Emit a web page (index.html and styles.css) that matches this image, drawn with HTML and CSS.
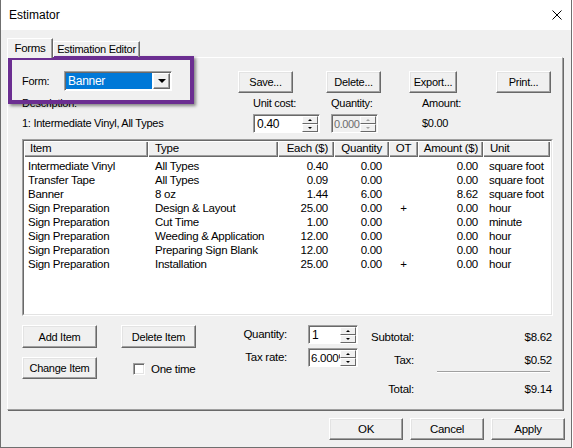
FILE: index.html
```html
<!doctype html>
<html>
  <head>
    <meta charset="utf-8">
    <title>Estimator</title>
    <link rel="stylesheet" href="styles.css">
  </head>
  <body>
    <div class="window">

      <div class="titlebar">
        <span class="title">Estimator</span>
        <svg class="close" width="10" height="10" viewBox="0 0 10 10">
          <path d="M0.5 0.5 L9.5 9.5 M9.5 0.5 L0.5 9.5" stroke="#000" stroke-width="1" fill="none"/>
        </svg>
      </div>

      <div class="client">
        <div class="tabs">
          <div class="tab active">Forms</div>
          <div class="tab">Estimation Editor</div>
        </div>

        <div class="panel">

          <div class="form-row">
            <span class="lbl-form">Form:</span>
            <div class="combo">
              <span class="combo-sel">Banner</span>
              <span class="combo-drop"></span>
            </div>
            <button class="btn btn-save">Save...</button>
            <button class="btn btn-delete">Delete...</button>
            <button class="btn btn-export">Export...</button>
            <button class="btn btn-print">Print...</button>
          </div>

          <div class="desc-grid">
            <span>Description:</span>
            <span>Unit cost:</span>
            <span>Quantity:</span>
            <span>Amount:</span>
            <span class="mid">1: Intermediate Vinyl, All Types</span>
            <div class="spin spin-cost">
              <span class="spin-val">0.40</span>
              <span class="spin-btns"><span class="up"></span><span class="down"></span></span>
            </div>
            <div class="spin spin-qty disabled">
              <span class="spin-val">0.000</span>
              <span class="spin-btns"><span class="up"></span><span class="down"></span></span>
            </div>
            <span class="mid">$0.00</span>
          </div>

          <div class="listview">
            <div class="lv-inner">
              <div class="lv-head">
                <span class="c-item">Item</span>
                <span class="c-type">Type</span>
                <span class="c-each">Each ($)</span>
                <span class="c-qty">Quantity</span>
                <span class="c-ot">OT</span>
                <span class="c-amt">Amount ($)</span>
                <span class="c-unit">Unit</span>
              </div>
              <div class="lv-body">
                <div class="lv-row"><span class="c-item">Intermediate Vinyl</span><span class="c-type">All Types</span><span class="c-each">0.40</span><span class="c-qty">0.00</span><span class="c-ot"></span><span class="c-amt">0.00</span><span class="c-unit">square foot</span></div>
                <div class="lv-row"><span class="c-item">Transfer Tape</span><span class="c-type">All Types</span><span class="c-each">0.09</span><span class="c-qty">0.00</span><span class="c-ot"></span><span class="c-amt">0.00</span><span class="c-unit">square foot</span></div>
                <div class="lv-row"><span class="c-item">Banner</span><span class="c-type">8 oz</span><span class="c-each">1.44</span><span class="c-qty">6.00</span><span class="c-ot"></span><span class="c-amt">8.62</span><span class="c-unit">square foot</span></div>
                <div class="lv-row"><span class="c-item">Sign Preparation</span><span class="c-type">Design &amp; Layout</span><span class="c-each">25.00</span><span class="c-qty">0.00</span><span class="c-ot">+</span><span class="c-amt">0.00</span><span class="c-unit">hour</span></div>
                <div class="lv-row"><span class="c-item">Sign Preparation</span><span class="c-type">Cut Time</span><span class="c-each">1.00</span><span class="c-qty">0.00</span><span class="c-ot"></span><span class="c-amt">0.00</span><span class="c-unit">minute</span></div>
                <div class="lv-row"><span class="c-item">Sign Preparation</span><span class="c-type">Weeding &amp; Application</span><span class="c-each">12.00</span><span class="c-qty">0.00</span><span class="c-ot"></span><span class="c-amt">0.00</span><span class="c-unit">hour</span></div>
                <div class="lv-row"><span class="c-item">Sign Preparation</span><span class="c-type">Preparing Sign Blank</span><span class="c-each">12.00</span><span class="c-qty">0.00</span><span class="c-ot"></span><span class="c-amt">0.00</span><span class="c-unit">hour</span></div>
                <div class="lv-row"><span class="c-item">Sign Preparation</span><span class="c-type">Installation</span><span class="c-each">25.00</span><span class="c-qty">0.00</span><span class="c-ot">+</span><span class="c-amt">0.00</span><span class="c-unit">hour</span></div>
              </div>
            </div>
          </div>

          <div class="bottom">
            <div class="col-edit">
              <button class="btn btn-item">Add Item</button>
              <button class="btn btn-item btn-change">Change Item</button>
            </div>
            <div class="col-del">
              <button class="btn btn-item">Delete Item</button>
              <div class="check-row">
                <span class="checkbox"></span>
                <span>One time</span>
              </div>
            </div>
            <div class="col-spin">
              <span class="spin-lbl">Quantity:</span>
              <div class="spin spin-small">
                <span class="spin-val">1</span>
                <span class="spin-btns"><span class="up"></span><span class="down"></span></span>
              </div>
              <span class="spin-lbl">Tax rate:</span>
              <div class="spin spin-small">
                <span class="spin-val spin-tight">6.000%</span>
                <span class="spin-btns"><span class="up"></span><span class="down"></span></span>
              </div>
            </div>
            <div class="col-totals">
              <div class="tot-row"><span>Subtotal:</span><span>$8.62</span></div>
              <div class="tot-row tot-tax"><span>Tax:</span><span>$0.52</span></div>
              <div class="tot-sep"></div>
              <div class="tot-row tot-total"><span>Total:</span><span>$9.14</span></div>
            </div>
          </div>

        </div>

        <div class="dlg-buttons">
          <button class="btn btn-dlg">OK</button>
          <button class="btn btn-dlg">Cancel</button>
          <button class="btn btn-dlg">Apply</button>
        </div>
      </div>

      <!-- annotation box drawn over the form picker -->
      <div class="highlight"></div>
    </div>
  </body>
</html>
```

FILE: styles.css
```css
html, body {
  margin: 0;
  padding: 0;
  background: #ffffff;
}

body {
  font-family: "Liberation Sans", Arial, sans-serif;
  font-size: 11px;
  letter-spacing: -0.27px;
  color: #000000;
}

.window {
  position: relative;
  width: 572px;
  height: 448px;
  box-sizing: border-box;
  border: 1px solid #6f6f6f;
  border-top: none;
  background: #f0f0f0;
}

.titlebar {
  height: 30px;
  background: #ffffff;
  display: flex;
  align-items: center;
  justify-content: space-between;
  padding: 0 9px 0 8px;
}

.title {
  font-size: 12px;
  letter-spacing: 0;
}

.client {
  padding: 8px 0 0 6px;
}

/* tabs */
.tabs {
  display: flex;
  align-items: flex-end;
  height: 19px;
  position: relative;
  z-index: 1;
}

.tab {
  box-sizing: border-box;
  height: 16px;
  width: 87px;
  line-height: 15px;
  text-align: center;
  border-top: 1px solid #ffffff;
  border-left: 1px solid #ffffff;
  border-right: 1px solid #696969;
  box-shadow: inset -1px 0 #a0a0a0;
}

.tab.active {
  width: 46px;
  height: 20px;
  line-height: 19px;
  margin-bottom: -1px;
  background: #f0f0f0;
  font-size: 11.5px;
}

/* tab page */
.panel {
  width: 556px;
  height: 353px;
  box-sizing: border-box;
  border-top: 1px solid #ffffff;
  border-left: 1px solid #ffffff;
  border-right: 1px solid #a0a0a0;
  border-bottom: 1px solid #a0a0a0;
  box-shadow: 1px 1px 0 #696969;
}

.form-row {
  display: flex;
  align-items: flex-start;
  margin-top: 13px;
  padding-left: 14px;
  height: 22px;
}

.lbl-form {
  width: 42px;
  line-height: 20px;
}

.combo {
  width: 108px;
  height: 20px;
  box-sizing: border-box;
  display: flex;
  border: 1px solid;
  border-color: #a0a0a0 #ffffff #ffffff #a0a0a0;
  box-shadow: inset 1px 1px #696969;
  background: #ffffff;
  padding: 1px;
}

.combo-sel {
  flex: 1;
  background: #0078d7;
  color: #ffffff;
  padding-left: 2px;
  line-height: 16px;
  font-size: 12px;
  margin-right: 1px;
}

.combo-drop {
  width: 17px;
  box-sizing: border-box;
  background: #f0f0f0;
  border: 1px solid;
  border-color: #ffffff #696969 #696969 #ffffff;
  box-shadow: inset -1px -1px #a0a0a0;
  display: flex;
  align-items: center;
  justify-content: center;
}

.combo-drop::after {
  content: "";
  border-left: 4px solid transparent;
  border-right: 4px solid transparent;
  border-top: 4px solid #000000;
}

/* push buttons */
.btn {
  box-sizing: border-box;
  height: 22px;
  padding: 0;
  margin: 0;
  font-family: inherit;
  font-size: 11px;
  letter-spacing: -0.27px;
  color: #000000;
  background: #f0f0f0;
  border: 1px solid;
  border-color: #ffffff #696969 #696969 #ffffff;
  box-shadow: inset -1px -1px #a0a0a0, inset 1px 1px #e3e3e3;
}

.btn-save {
  width: 55px;
  margin-left: 66px;
}

.btn-delete {
  width: 55px;
  margin-left: 33px;
}

.btn-export {
  width: 48px;
  margin-left: 28px;
}

.btn-print {
  width: 55px;
  margin-left: 39px;
}

/* description + spinners */
.desc-grid {
  display: grid;
  grid-template-columns: 231px 78px 91px 1fr;
  grid-template-rows: 13px 19px;
  row-gap: 4px;
  margin-top: 4px;
  padding-left: 14px;
  line-height: 13px;
}

.desc-grid .mid {
  align-self: center;
}

.spin {
  display: flex;
  height: 19px;
  box-sizing: border-box;
  border: 1px solid;
  border-color: #a0a0a0 #ffffff #ffffff #a0a0a0;
  box-shadow: inset 1px 1px #696969;
  background: #ffffff;
}

.spin-cost {
  width: 67px;
}

.spin-qty {
  width: 47px;
}

.spin-small {
  width: 50px;
}

.spin-val {
  flex: 1;
  min-width: 0;
  overflow: hidden;
  white-space: nowrap;
  padding: 1px 0 0 3px;
  line-height: 16px;
  font-size: 12px;
}

.spin-qty .spin-val {
  padding-left: 2px;
  font-size: 11px;
  letter-spacing: -0.4px;
}

.spin-tight {
  padding-left: 2px;
  font-size: 11.5px;
}

.spin-btns {
  width: 16px;
  display: flex;
  flex-direction: column;
  padding: 1px 1px 0 0;
}

.spin-btns span {
  flex: 1;
  box-sizing: border-box;
  background: #f0f0f0;
  border: 1px solid;
  border-color: #ffffff #696969 #696969 #ffffff;
  display: flex;
  align-items: center;
  justify-content: center;
}

.spin-btns .up::after {
  content: "";
  border-left: 2px solid transparent;
  border-right: 2px solid transparent;
  border-bottom: 2px solid #000000;
}

.spin-btns .down::after {
  content: "";
  border-left: 2px solid transparent;
  border-right: 2px solid transparent;
  border-top: 2px solid #000000;
}

.spin.disabled {
  background: #f0f0f0;
  color: #6d6d6d;
}

.spin.disabled .up::after {
  border-bottom-color: #a0a0a0;
}

.spin.disabled .down::after {
  border-top-color: #a0a0a0;
}

/* list view */
.listview {
  width: 531px;
  height: 177px;
  box-sizing: border-box;
  margin: 6px 0 0 14px;
  border: 1px solid;
  border-color: #a0a0a0 #ffffff #ffffff #a0a0a0;
}

.lv-inner {
  height: 100%;
  box-sizing: border-box;
  border: 1px solid;
  border-color: #696969 #e3e3e3 #e3e3e3 #696969;
  background: #ffffff;
}

.lv-head,
.lv-row {
  display: grid;
  grid-template-columns: 124px 130px 56px 55px 29px 65px 67px 1fr;
}

.lv-head {
  height: 16px;
}

.lv-head span {
  box-sizing: border-box;
  background: #f0f0f0;
  line-height: 15px;
  font-size: 11.5px;
  box-shadow: inset 1px 1px #ffffff, inset -1px -1px #696969, inset -2px -2px #a0a0a0;
  white-space: nowrap;
}

.lv-body {
  padding-top: 2px;
}

.lv-row {
  height: 14px;
  line-height: 14px;
  font-size: 11.5px;
}

.lv-row span {
  white-space: nowrap;
}

.c-item {
  padding-left: 4px;
}

.lv-head .c-item {
  padding-left: 6px;
}

.c-type {
  padding-left: 7px;
}

.c-each {
  text-align: right;
  padding-right: 6px;
}

.c-qty {
  text-align: right;
  padding-right: 7px;
}

.c-ot {
  text-align: center;
}

.c-amt {
  text-align: right;
  padding-right: 5px;
}

.c-unit {
  padding-left: 6px;
}

.lv-head .c-unit {
  padding-left: 7px;
}

/* lower controls */
.bottom {
  display: flex;
  align-items: flex-start;
  margin-top: 9px;
  padding-left: 14px;
}

.col-edit,
.col-del {
  display: flex;
  flex-direction: column;
  width: 75px;
}

.col-del {
  margin-left: 24px;
}

.btn-item {
  width: 75px;
  height: 23px;
}

.btn-change {
  height: 22px;
  margin-top: 9px;
}

.check-row {
  display: flex;
  align-items: center;
  gap: 6px;
  height: 14px;
  margin-top: 14px;
  padding-left: 12px;
  font-size: 11.5px;
}

.checkbox {
  width: 12px;
  height: 12px;
  box-sizing: border-box;
  background: #ffffff;
  border: 1px solid;
  border-color: #a0a0a0 #ffffff #ffffff #a0a0a0;
  box-shadow: inset 1px 1px #696969, inset -1px -1px #e3e3e3;
}

.col-spin {
  display: grid;
  grid-template-columns: 112px 50px;
  grid-auto-rows: 19px;
  row-gap: 4px;
}

.spin-lbl {
  text-align: right;
  padding-right: 21px;
  line-height: 19px;
  font-size: 11.5px;
}

.col-totals {
  display: flex;
  flex-direction: column;
  margin-top: 6px;
  width: 194px;
}

.tot-row {
  display: grid;
  grid-template-columns: 56px 138px;
  line-height: 13px;
  font-size: 11.5px;
}

.tot-row span {
  text-align: right;
}

.tot-tax {
  margin-top: 10px;
}

.tot-sep {
  margin: 4px 0 0 79px;
  width: 113px;
  height: 1px;
  background: #a0a0a0;
  border-bottom: 1px solid #ffffff;
}

.tot-total {
  margin-top: 10px;
}

/* OK / Cancel / Apply */
.dlg-buttons {
  display: flex;
  justify-content: flex-end;
  gap: 7px;
  margin-top: 8px;
  padding-right: 6px;
}

.btn-dlg {
  width: 74px;
  height: 22px;
  font-size: 11.5px;
}

.highlight {
  position: absolute;
  left: 7px;
  top: 56px;
  width: 186px;
  height: 48px;
  box-sizing: border-box;
  border: 4px solid #6b2e91;
  box-shadow: 2px 2px 3px rgba(0, 0, 0, 0.45);
}
```
